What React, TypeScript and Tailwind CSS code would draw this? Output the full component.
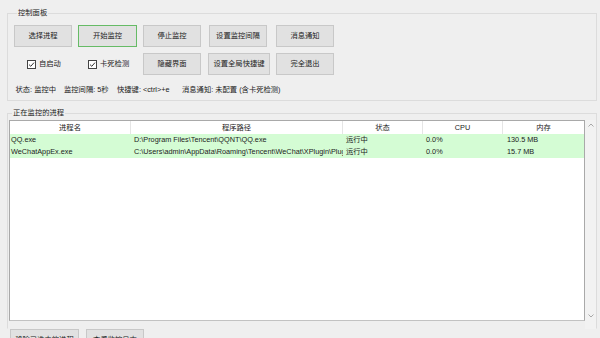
import clsx from "clsx";

type Proc = { name: string; path: string; state: string; cpu: string; mem: string };

const procs: Proc[] = [
  { name: "QQ.exe", path: "D:\\Program Files\\Tencent\\QQNT\\QQ.exe", state: "运行中", cpu: "0.0%", mem: "130.5 MB" },
  {
    name: "WeChatAppEx.exe",
    path: "C:\\Users\\admin\\AppData\\Roaming\\Tencent\\WeChat\\XPlugin\\Plugins\\RadiumWMPF\\WeChatAppEx.exe",
    state: "运行中",
    cpu: "0.0%",
    mem: "15.7 MB",
  },
];

const Btn = ({ label, w, green }: { label: string; w: string; green?: boolean }) => (
  <div
    className={clsx(
      "h-[22px] shrink-0 flex items-center justify-center border bg-[#e1e1e1] whitespace-nowrap",
      w,
      green ? "border-[#66bb66]" : "border-[#c8c8c8]"
    )}
  >
    {label}
  </div>
);

const Check = ({ label }: { label: string }) => (
  <div className="flex items-center gap-[3px]">
    <div className="w-[9px] h-[9px] border border-[#444] bg-white flex items-center justify-center">
      <svg width="7" height="7" viewBox="0 0 7 7" fill="none">
        <path d="M1 3.6 L2.8 5.3 L6 1.6" stroke="#333" strokeWidth="1" />
      </svg>
    </div>
    <span>{label}</span>
  </div>
);

const Chevron = ({ up }: { up?: boolean }) => (
  <svg width="6" height="4" viewBox="0 0 6 4" fill="none">
    <path d={up ? "M0.5 3.5 L3 1 L5.5 3.5" : "M0.5 0.5 L3 3 L5.5 0.5"} stroke="#a8a8a8" strokeWidth="1" />
  </svg>
);

export default function App() {
  return (
    <div className="w-[600px] h-[338px] overflow-hidden bg-[#efefef] text-[#222] text-[7.3px] leading-[10px] font-['Liberation_Sans','Noto_Sans_CJK_SC',sans-serif]">
      {/* 控制面板 */}
      <fieldset className="mt-[8px] ml-[7px] w-[590px] h-[93px] border border-[#dcdcdc] pl-[6px] pt-[7px]">
        <legend className="ml-[3px] px-[1px] leading-[10px]">控制面板</legend>
        <div className="flex">
          <Btn label="选择进程" w="w-[58px]" />
          <div className="ml-[6px]">
            <Btn label="开始监控" w="w-[59px]" green />
          </div>
          <div className="ml-[6px]">
            <Btn label="停止监控" w="w-[58px]" />
          </div>
          <div className="ml-[8px]">
            <Btn label="设置监控间隔" w="w-[58px]" />
          </div>
          <div className="ml-[9px]">
            <Btn label="消息通知" w="w-[58px]" />
          </div>
        </div>
        <div className="flex mt-[6px] items-center">
          <div className="w-[64px] pl-[13px]">
            <Check label="自启动" />
          </div>
          <div className="w-[65px] pl-[10px]">
            <Check label="卡死检测" />
          </div>
          <Btn label="隐藏界面" w="w-[58px]" />
          <div className="ml-[7px]">
            <Btn label="设置全局快捷键" w="w-[62px]" />
          </div>
          <div className="ml-[6px]">
            <Btn label="完全退出" w="w-[58px]" />
          </div>
        </div>
        <div className="mt-[10px] pl-[1.5px] flex whitespace-nowrap">
          <span className="w-[48.5px] shrink-0">状态: 监控中</span>
          <span className="w-[53px] shrink-0">监控间隔: 5秒</span>
          <span className="w-[65px] shrink-0">快捷键: &lt;ctrl&gt;+e</span>
          <span>消息通知: 未配置 (含卡死检测)</span>
        </div>
      </fieldset>

      {/* 正在监控的进程 */}
      <fieldset className="mt-[7px] ml-[7px] w-[590px] h-[221px] border border-[#dcdcdc] border-b-transparent pl-[1px] pt-[2px]">
        <legend className="ml-[3px] px-[1px] leading-[10px]">正在监控的进程</legend>
        <div className="flex items-start">
          <div className="w-[576px] h-[201px] bg-white border border-[#a9a9a9] border-b-[#c2c2c2] overflow-hidden">
            <div className="grid grid-cols-[121px_212px_80px_80px_1fr] h-[13px]">
              {["进程名", "程序路径", "状态", "CPU", "内存"].map((h, i) => (
                <div
                  key={h}
                  className={clsx("flex items-center justify-center", i < 4 && "border-r border-[#e5e5e5]")}
                >
                  {h}
                </div>
              ))}
            </div>
            {procs.map((p) => (
              <div key={p.name} className="grid grid-cols-[121px_212px_80px_80px_1fr] h-[12px] bg-[#d4fcd4] items-center whitespace-nowrap">
                <div className="pl-[1px] overflow-hidden">{p.name}</div>
                <div className="pl-[3px] overflow-hidden">{p.path}</div>
                <div className="pl-[3px] overflow-hidden">{p.state}</div>
                <div className="pl-[3px] overflow-hidden">{p.cpu}</div>
                <div className="pl-[4px] overflow-hidden">{p.mem}</div>
              </div>
            ))}
          </div>
          <div className="w-[11px] h-[209px] bg-[#f2f2f2] flex flex-col items-center justify-between pt-[3px] pb-[11px]">
            <Chevron up />
            <Chevron />
          </div>
        </div>
      </fieldset>

      <div className="flex pl-[10px] gap-[7px]">
        <Btn label="移除已选中的进程" w="w-[69px]" />
        <Btn label="查看监控日志" w="w-[58px]" />
      </div>
    </div>
  );
}
